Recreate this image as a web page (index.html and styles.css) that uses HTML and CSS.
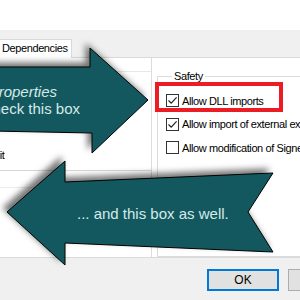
FILE: index.html
```html
<!DOCTYPE html>
<html lang="en">
<head>
    <meta charset="UTF-8">
    <meta name="viewport" content="width=device-width, initial-scale=1.0">
    <title>Project Properties - Safety</title>
    <link rel="stylesheet" href="styles.css">
</head>
<body>
    <div class="window">
        <div class="top"></div>

        <div class="tabs">
            <div class="tab">Dependencies</div>
        </div>

        <div class="panel">
            <div class="left">
                <div class="left-rule"></div>
                <div class="left-label">Edit</div>
                <div class="rule"></div>
                <div class="rule faint"></div>
            </div>

            <fieldset class="safety">
                <legend>Safety</legend>
                <label class="check">
                    <span class="box"><svg width="11" height="11" viewBox="0 0 11 11"><path d="M1.5 5.5 L4.2 8.2 L9.6 2.4" /></svg></span>
                    Allow DLL imports
                </label>
                <label class="check">
                    <span class="box"><svg width="11" height="11" viewBox="0 0 11 11"><path d="M1.5 5.5 L4.2 8.2 L9.6 2.4" /></svg></span>
                    Allow import of external extensions
                </label>
                <label class="check">
                    <span class="box"></span>
                    Allow modification of Signed assemblies
                </label>
            </fieldset>
        </div>

        <div class="footer">
            <button class="btn default">OK</button>
            <button class="btn">Cancel</button>
        </div>
    </div>

    <!-- callout overlay -->
    <div class="highlight"></div>

    <svg class="arrows" width="300" height="300" viewBox="0 0 300 300">
        <g class="arrow">
            <polygon points="-10,67 90,67 90,48 148,100 92,153 92,133 -10,131" />
        </g>
        <g class="arrow">
            <polygon points="7,212 65,161 65,182 273,173 248,212 273,252 65,243 65,265" />
        </g>
        <text class="callout italic" x="57" y="97" text-anchor="end">Project Properties</text>
        <text class="callout" x="80" y="114" text-anchor="end">... check this box</text>
        <text class="callout" x="77" y="219">... and this box as well.</text>
    </svg>
</body>
</html>
```

FILE: styles.css
```css
body {
    margin: 0;
    width: 300px;
    height: 300px;
    overflow: hidden;
    position: relative;
    font-family: "Liberation Sans", Arial, sans-serif;
    font-size: 11px;
    letter-spacing: -0.4px;
    color: #000;
    background: #fff;
}
.window {
    width: 300px;
    height: 300px;
    display: flex;
    flex-direction: column;
}
.top {
    height: 30px;
    background: #fff;
}
.tabs {
    height: 28px;
    background: #f0f0f0;
    display: flex;
    align-items: flex-end;
    border-bottom: 1px solid #d9d9d9;
    box-sizing: border-box;
}
.tab {
    width: 72px;
    height: 19px;
    box-sizing: border-box;
    background: #fff;
    border: 1px solid #d9d9d9;
    border-left: none;
    border-bottom: none;
    padding-left: 2px;
    line-height: 17px;
    margin-bottom: -1px;
}
.panel {
    height: 200px;
    display: flex;
    background: #fff;
    border-bottom: 1px solid #dadada;
    box-sizing: border-box;
}
.left {
    width: 152px;
    flex-shrink: 0;
    border-right: 1px solid #dcdcdc;
    padding-top: 13px;
    box-sizing: border-box;
}
.left-rule {
    border-top: 1px solid #e8e8e8;
    margin-bottom: 75px;
}
.left-label {
    height: 16px;
    line-height: 16px;
    text-indent: -13px;
}
.rule {
    margin-top: 7px;
    border-top: 1px solid #d6d6d6;
}
.rule.faint {
    margin-top: 16px;
    border-top-color: #ececec;
}
.safety {
    margin: 12px 0 0 5px;
    padding: 7px 0 0 8px;
    border: 1px solid #dcdcdc;
    border-right: none;
    flex: 1;
    min-width: 0;
    white-space: nowrap;
}
.safety legend {
    padding: 0 2px;
    margin-left: 6px;
    line-height: 12px;
}
.check {
    display: flex;
    align-items: center;
    gap: 3px;
    height: 23.5px;
}
.box {
    width: 13px;
    height: 13px;
    box-sizing: border-box;
    border: 1px solid #333;
    background: #fff;
    flex-shrink: 0;
    display: flex;
    align-items: center;
    justify-content: center;
}
.box path {
    fill: none;
    stroke: #222;
    stroke-width: 1.2;
}
.footer {
    flex: 1;
    background: #f0f0f0;
    display: flex;
    gap: 9px;
    padding: 11px 0 0 207px;
}
.btn {
    width: 72px;
    height: 22px;
    flex-shrink: 0;
    box-sizing: border-box;
    background: #e1e1e1;
    border: 1px solid #adadad;
    font-family: inherit;
    font-size: 12px;
    padding: 0;
}
.btn.default {
    border: 2px solid #0078d7;
}
.highlight {
    position: absolute;
    left: 155px;
    top: 82px;
    width: 128px;
    height: 30px;
    box-sizing: border-box;
    border: 4px solid #ec1c24;
}
.arrows {
    position: absolute;
    left: 0;
    top: 0;
}
.arrow {
    filter: drop-shadow(-4px -4px 3px rgba(0, 0, 0, 0.55));
}
.arrow polygon {
    fill: #13585f;
    stroke: #000;
    stroke-width: 1;
}
.callout {
    font-family: "Liberation Sans", Arial, sans-serif;
    font-size: 15px;
    letter-spacing: 0;
    fill: #d4eae8;
}
.callout.italic {
    font-style: italic;
}
```
